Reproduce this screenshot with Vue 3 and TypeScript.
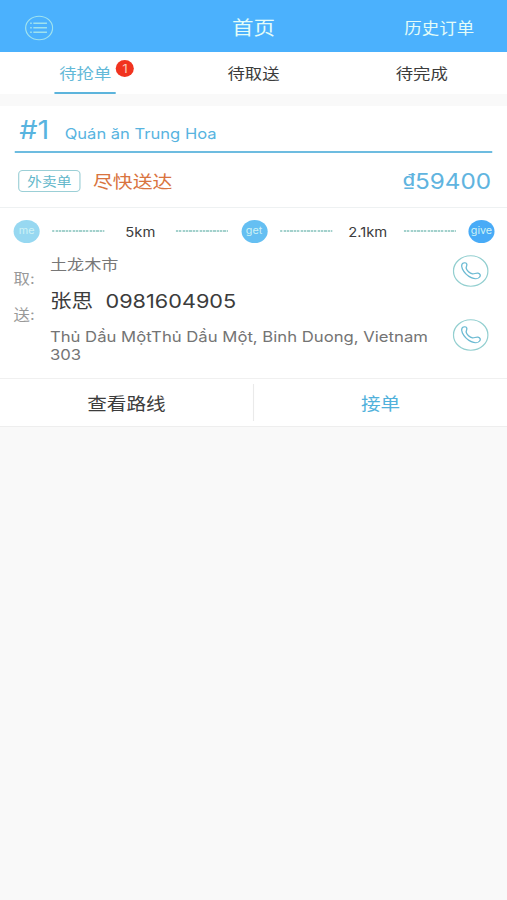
<script setup lang="ts">
import { ref } from 'vue'

interface Tab { label: string; badge?: number }

const tabs: Tab[] = [
  { label: '待抢单', badge: 1 },
  { label: '待取送' },
  { label: '待完成' },
]
const active = ref(0)

const order = {
  index: '#1',
  shop: 'Quán ăn Trung Hoa',
  tag: '外卖单',
  urgency: '尽快送达',
  currency: '₫',
  price: '59400',
  pickup: '土龙木市',
  customer: '张思',
  phone: '0981604905',
  address: 'Thủ Dầu MộtThủ Dầu Một, Binh Duong, Vietnam 303',
}
const contacts = ['pickup', 'customer']
</script>

<template>
  <div class="screen">
    <header class="bar">
      <button class="menu" aria-label="menu">
        <svg width="25" height="26" viewBox="0 0 25 26" fill="none" stroke="#9fe2ee">
          <ellipse cx="12.5" cy="13" rx="11.9" ry="11.7" stroke-width="1.1" />
          <path d="M7.4 8.2H19.4M7.4 12.7H19.4M7.4 17.2H19.4" stroke-width="1.6" />
          <path d="M4.6 8.2H6M4.6 12.7H6M4.6 17.2H6" stroke-width="1.5" />
        </svg>
      </button>
      <h1>首页</h1>
      <a class="history">历史订单</a>
    </header>

    <nav class="tabs">
      <button
        v-for="(tab, i) in tabs"
        :key="tab.label"
        class="tab"
        :class="{ active: active === i }"
        @click="active = i"
      >
        <span class="tab-label">{{ tab.label }}<i v-if="tab.badge" class="badge">{{ tab.badge }}</i></span>
      </button>
    </nav>

    <section class="card">
      <div class="heading">
        <span class="index">{{ order.index }}</span>
        <span class="shop">{{ order.shop }}</span>
      </div>
      <div class="summary">
        <span class="tag">{{ order.tag }}</span>
        <span class="urgency">{{ order.urgency }}</span>
        <span class="price"><span class="currency">{{ order.currency }}</span>{{ order.price }}</span>
      </div>
      <div class="route">
        <span class="node me">me</span>
        <i class="dots"></i><span class="km">5km</span><i class="dots"></i>
        <span class="node get">get</span>
        <i class="dots"></i><span class="km">2.1km</span><i class="dots"></i>
        <span class="node give">give</span>
      </div>
      <div class="details">
        <div class="labels"><span>取:</span><span>送:</span></div>
        <div class="info">
          <p class="pickup">{{ order.pickup }}</p>
          <p class="customer">{{ order.customer }}<span>{{ order.phone }}</span></p>
          <p class="address">{{ order.address }}</p>
        </div>
        <div class="calls">
          <button v-for="c in contacts" :key="c" :aria-label="c">
            <svg width="32" height="32" viewBox="0 0 32 32" fill="none">
              <circle cx="16" cy="16" r="15.2" stroke="#93cfd0" stroke-width="1.1" />
              <path
                d="M8.3 9.2C9 7.6 11.6 7.2 12.4 8.7C13.2 10.2 11.8 11.8 12 13.1C12.5 15.6 15.1 18.4 17.6 18.9C19.2 19.2 20.7 17.7 22.4 18.2C24.5 18.8 24.9 20.6 23.9 22C22.5 24.1 19.3 24.1 16.5 22.6C13.2 20.9 10.2 17.6 8.7 14C8 12.3 7.7 10.5 8.3 9.2Z"
                stroke="#6dbbd3" stroke-width="1.2" stroke-linejoin="round"
              />
            </svg>
          </button>
        </div>
      </div>
      <footer class="actions">
        <button class="view">查看路线</button>
        <button class="accept">接单</button>
      </footer>
    </section>
  </div>
</template>

<style>
body { background: #f9f9f9; overflow: hidden; }
</style>

<style scoped>
.screen {
  width: 447px;
  height: 900px;
  transform: scaleX(1.13423);
  transform-origin: 0 0;
  background: #f9f9f9;
  font-family: Inter, "Noto Sans CJK SC", sans-serif;
  color: #3c3c3c;
}
* { box-sizing: border-box; }
button {
  padding: 0;
  border: 0;
  background: none;
  font: inherit;
  color: inherit;
}
h1, p { margin: 0; font-weight: 400; }
svg { display: block; }
.bar {
  display: grid;
  grid-template-columns: 1fr auto 1fr;
  align-items: center;
  height: 52px;
  padding: 4px 29px 0 22px;
  background: #4bb1fd;
  color: #e3fcf8;
}
.bar h1 { font-size: 19px; line-height: 24px; padding: 2px 0 0 7px; }
.history { justify-self: end; margin-top: -2px; font-size: 15.4px; }
.tabs {
  display: flex;
  height: 42px;
  padding: 0 1px;
  background: #fff;
}
.tab {
  flex: 1;
  display: flex;
  justify-content: center;
  font-size: 15.3px;
}
.tab-label {
  position: relative;
  height: 42px;
  padding: 0 4px;
  line-height: 43px;
}
.active .tab-label { color: #63b9d8; border-bottom: 2px solid #5cb4dc; }
.badge {
  position: absolute;
  left: 54px;
  top: 8px;
  width: 16px;
  height: 17px;
  border-radius: 50%;
  background: #f1331f;
  color: #fbc9b8;
  font-size: 12px;
  font-style: normal;
  line-height: 17px;
  text-align: center;
}
.card { margin-top: 12px; background: #fff; }
.heading {
  display: flex;
  align-items: baseline;
  height: 47px;
  margin: 0 13px;
  padding: 8px 0 0 4px;
  border-bottom: 2px solid #6dbce0;
  color: #58b4df;
}
.index { width: 40px; font-size: 25.5px; line-height: 32px; }
.shop { font-size: 14.6px; }
.summary {
  display: flex;
  align-items: center;
  height: 55px;
  padding: 2px 14px 0 16px;
  border-bottom: 1px solid #eef1f2;
}
.tag {
  width: 55px;
  height: 22px;
  border: 1px solid #9bcfd6;
  border-radius: 4px;
  color: #62b7ca;
  font-size: 13px;
  line-height: 20px;
  text-align: center;
}
.urgency { margin: -2px 0 0 11px; color: #d9743f; font-size: 17.5px; }
.price {
  display: flex;
  align-items: baseline;
  margin: 1px 0 0 auto;
  color: #60b4df;
  font-size: 21.4px;
  line-height: 26px;
}
.currency { font-size: 17.5px; font-weight: 500; line-height: 18px; padding-bottom: 3px; transform: translateY(-3px); }
.route {
  display: flex;
  align-items: center;
  justify-content: space-between;
  height: 46px;
  padding: 1px 11px 0 12px;
}
.node {
  width: 23px;
  height: 23px;
  border-radius: 50%;
  color: #cdf2f5;
  font-size: 9.5px;
  line-height: 22px;
  text-align: center;
}
.me { background: #97d8f1; }
.get { background: #65bff2; }
.give { background: #48abf7; }
.dots {
  width: 46px;
  height: 2px;
  margin-top: -1px;
  background: repeating-linear-gradient(90deg, #a3d1cc 0 2px, #e2f1f0 2px 3px);
}
.km { width: 41px; font-size: 13px; text-align: center; white-space: nowrap; }
.details { display: flex; height: 124px; padding-left: 12px; }
.labels {
  display: flex;
  flex-direction: column;
  width: 32px;
  padding-top: 13px;
  color: #999;
  font-size: 14.5px;
}
.labels span { height: 36px; line-height: 24px; }
.info { width: 342px; padding-top: 1px; }
.pickup { color: #777; font-size: 15.1px; line-height: 20px; }
.customer { margin-top: 12px; font-size: 19px; line-height: 28px; }
.customer span { margin-left: 11px; font-size: 19.1px; }
.address { margin-top: 12px; color: #747474; font-size: 14.72px; line-height: 18px; }
.calls { display: flex; flex-direction: column; gap: 32px; margin-left: 12.5px; padding-top: 1px; }
.actions {
  display: flex;
  align-items: center;
  height: 49px;
  border-top: 1px solid #f0f0f0;
  border-bottom: 1px solid #eee;
  font-size: 17.3px;
}
.actions button { flex: 1; height: 37px; padding-bottom: 1px; }
.actions .accept { border-left: 1px solid #eaeaea; color: #52b1db; }
</style>
